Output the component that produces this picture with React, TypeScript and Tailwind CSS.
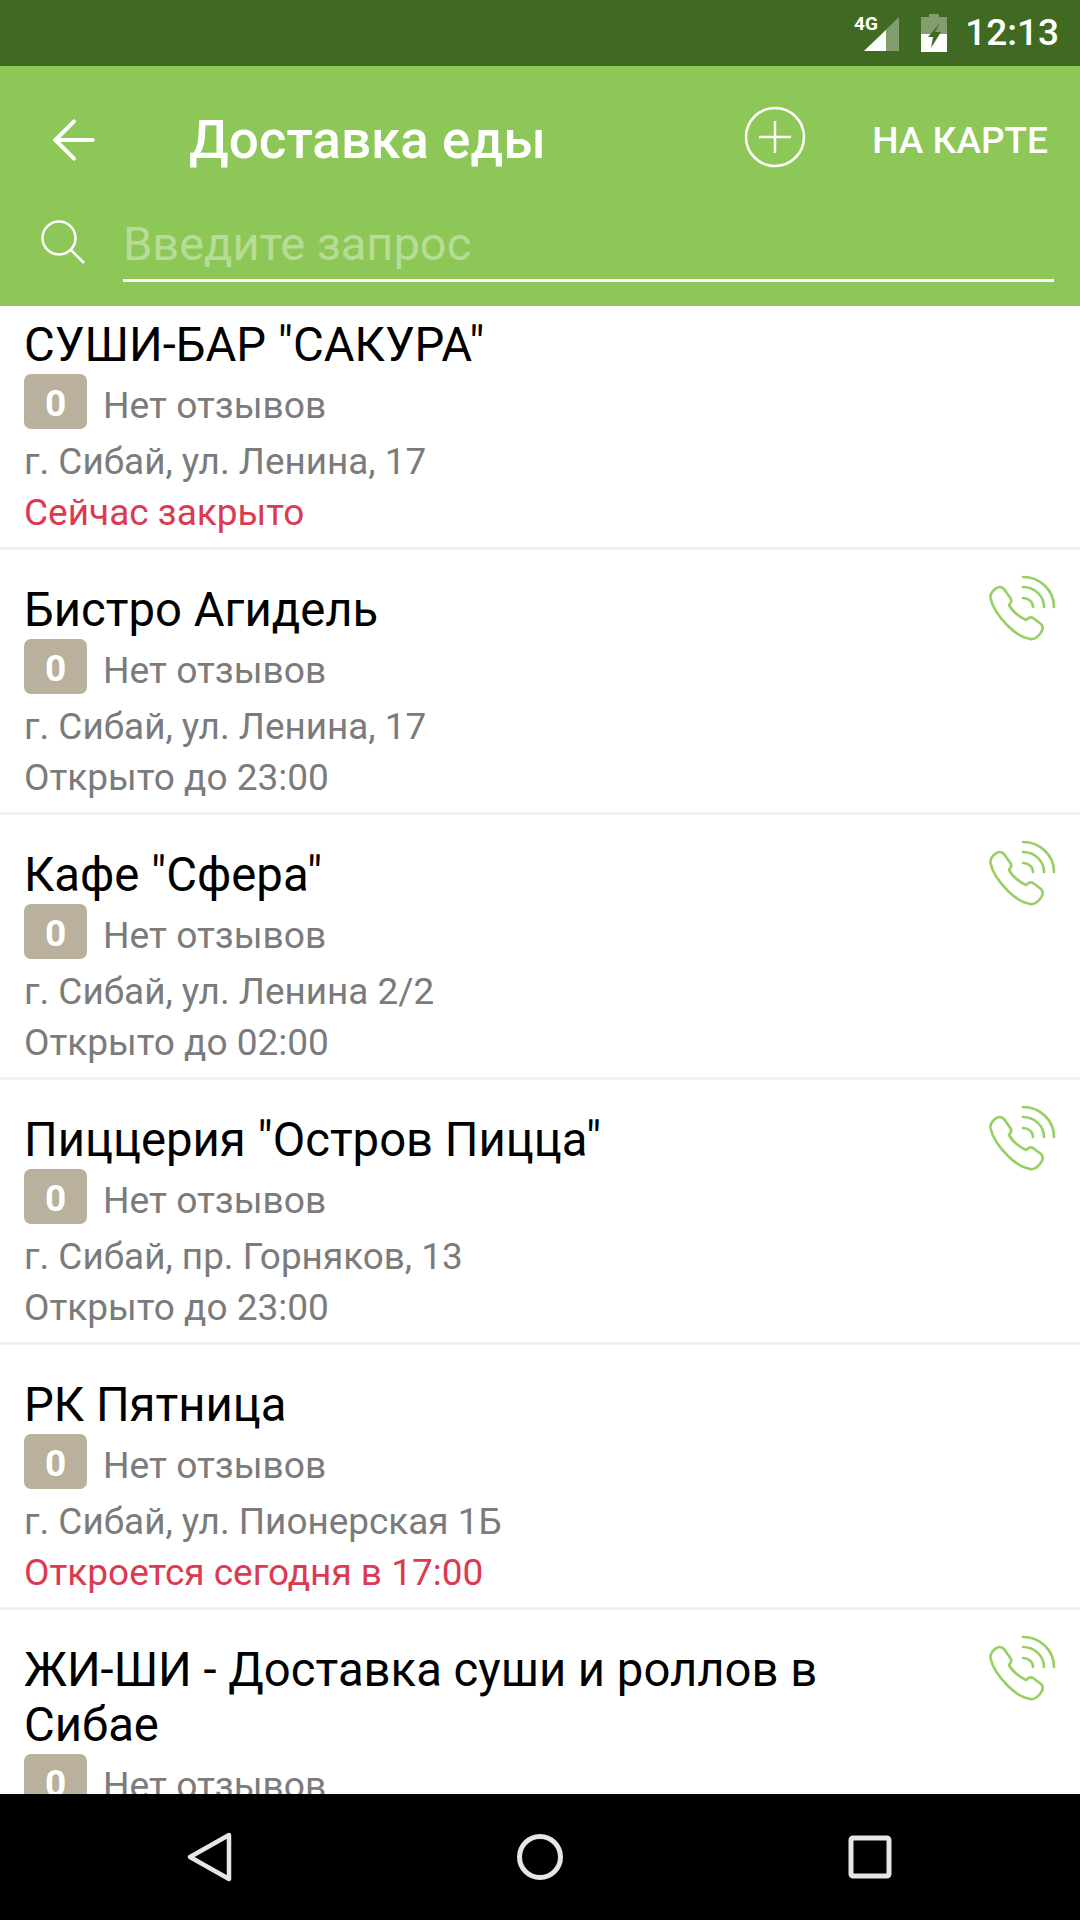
import React from 'react';
import { ArrowLeft } from 'lucide-react';

type Place = {
  name: string;
  address: string;
  hours: string;
  closed?: boolean;
  phone?: boolean;
};

const places: Place[] = [
  { name: 'СУШИ-БАР "САКУРА"', address: 'г. Сибай, ул. Ленина, 17', hours: 'Сейчас закрыто', closed: true },
  { name: 'Бистро Агидель', address: 'г. Сибай, ул. Ленина, 17', hours: 'Открыто до 23:00', phone: true },
  { name: 'Кафе "Сфера"', address: 'г. Сибай, ул. Ленина 2/2', hours: 'Открыто до 02:00', phone: true },
  { name: 'Пиццерия "Остров Пицца"', address: 'г. Сибай, пр. Горняков, 13', hours: 'Открыто до 23:00', phone: true },
  { name: 'РК Пятница', address: 'г. Сибай, ул. Пионерская 1Б', hours: 'Откроется сегодня в 17:00', closed: true },
  { name: 'ЖИ-ШИ - Доставка суши и роллов в Сибае', address: 'г. Сибай, ул. Ленина, 17', hours: 'Открыто до 23:00', phone: true },
];

function PhoneIcon() {
  return (
    <svg width="72" height="72" viewBox="0 0 72 72" fill="none" stroke="#97cf63" strokeWidth="2.600" strokeLinecap="round" strokeLinejoin="round">
      <path d="M4.500 25 Q4 20 9 16 Q14 12 18 16 L25 26 Q26 29 23 32 Q28 41 40 47 Q44 43 47 45 L55 51 Q59 55 54 61 Q49 67 44 66 Q33 64 22 53 Q7 38 4.500 25 Z" />
      <path d="M37 25 A10 9 0 0 1 47 34" />
      <path d="M37 14 A21 20 0 0 1 58 34" />
      <path d="M37 4 A31 30 0 0 1 68 34" />
    </svg>
  );
}

function PlaceRow({ place }: { place: Place }) {
  return (
    <div className="relative border-b-[3px] border-[#f2f2f2] pl-6 pr-6 pt-[33px] pb-[10px]">
      <div className="pr-[200px] text-[47.25px] leading-[55px] text-black">{place.name}</div>
      <div className="mt-[1px] flex h-[55px] items-center gap-4">
        <div className="flex h-[55px] w-[63px] items-center justify-center rounded-[7px] bg-[#b9b19d] pt-[5px] text-[37px] font-bold text-white">0</div>
        <div className="mt-[9px] text-[37.2px] text-[#7b7b7b]">Нет отзывов</div>
      </div>
      <div className="mt-[9px] text-[36.9px] leading-[48px] text-[#7b7b7b]">{place.address}</div>
      <div className={`mt-[3px] text-[37px] leading-[48px] ${place.closed ? 'text-[#dc3a50]' : 'text-[#7b7b7b]'}`}>{place.hours}</div>
      {place.phone && (
        <div className="absolute right-[22px] top-[23px]">
          <PhoneIcon />
        </div>
      )}
    </div>
  );
}

export default function App() {
  return (
    <div className="relative flex h-[1920px] w-[1080px] flex-col overflow-hidden bg-white font-['Roboto',sans-serif]">
      {/* Status bar */}
      <div className="flex h-[66px] shrink-0 items-center justify-end bg-[#406a21] pr-[21px] text-white">
        <svg width="52" height="40" viewBox="0 0 52 40" className="mr-[18px]">
          <path d="M48 4 L48 38 L13 38 Z" fill="#ffffff" fillOpacity="0.35" />
          <path d="M35 17 L35 38 L13 38 Z" fill="#ffffff" />
        </svg>
        <svg width="26" height="38" viewBox="0 0 26 38" className="mr-[18px]">
          <path d="M8 0 H18 V3 H26 V38 H0 V3 H8 Z" fill="#ffffff" fillOpacity="0.35" />
          <path d="M0 20 H26 V38 H0 Z" fill="#ffffff" />
          <path d="M19 9 L7 23 H12 L10 34 L20 18 H14 Z" fill="#406a21" />
        </svg>
        <div className="text-[37px] font-medium">12:13</div>
      </div>
      <div className="absolute left-[854px] top-[13px] text-[19px] font-bold leading-[22px] text-white">4G</div>

      {/* Toolbar */}
      <div className="flex h-[240px] shrink-0 flex-col bg-[#8dc757] text-white">
        <div className="flex h-[150px] items-center">
          <div className="mr-[41px] mt-[-3px] flex w-[148px] justify-center">
            <ArrowLeft size={64} strokeWidth={1.5} />
          </div>
          <div className="flex-1 text-[53px] font-medium">Доставка еды</div>
          <svg width="62" height="62" viewBox="0 0 62 62" fill="none" stroke="#ffffff" strokeWidth="2.500" className="mr-[66px] mt-[-8px]">
            <circle cx="31" cy="31" r="29" />
            <path d="M15 31 H47 M31 15 V47" />
          </svg>
          <div className="mr-[32px] text-[37px] font-medium">НА КАРТЕ</div>
        </div>
        <div className="mt-[4px] flex items-start pl-[40px] pr-[26px]">
          <svg width="48" height="48" viewBox="0 0 48 48" fill="none" stroke="#ffffff" strokeWidth="2.500" className="mr-[35px] mt-[-1px]">
            <circle cx="19" cy="19" r="16.500" />
            <path d="M31 31 L44 44" />
          </svg>
          <div className="flex-1 border-b-[3px] border-white pb-[11px] text-[47px] leading-[48px] text-white/40">Введите запрос</div>
        </div>
      </div>

      {/* Places list */}
      <div className="min-h-0 flex-1 overflow-hidden">
        <div className="mt-[-21px]">
          {places.map((place) => (
            <PlaceRow key={place.name} place={place} />
          ))}
        </div>
      </div>

      {/* Navigation bar */}
      <div className="flex h-[126px] shrink-0 items-center justify-center gap-[198px] bg-black">
        <div className="flex w-[132px] justify-center">
          <svg width="46" height="50" viewBox="0 0 46 50" fill="none" stroke="#e6e6e6" strokeWidth="4.500" strokeLinejoin="round">
            <path d="M42 3 L3 25 L42 47 Z" />
          </svg>
        </div>
        <div className="flex w-[132px] justify-center">
          <svg width="48" height="48" viewBox="0 0 48 48" fill="none" stroke="#e6e6e6" strokeWidth="5">
            <circle cx="24" cy="24" r="20.500" />
          </svg>
        </div>
        <div className="flex w-[132px] justify-center">
          <svg width="44" height="44" viewBox="0 0 44 44" fill="none" stroke="#e6e6e6" strokeWidth="5" strokeLinejoin="round">
            <rect x="3" y="3" width="38" height="38" rx="2" />
          </svg>
        </div>
      </div>
    </div>
  );
}
